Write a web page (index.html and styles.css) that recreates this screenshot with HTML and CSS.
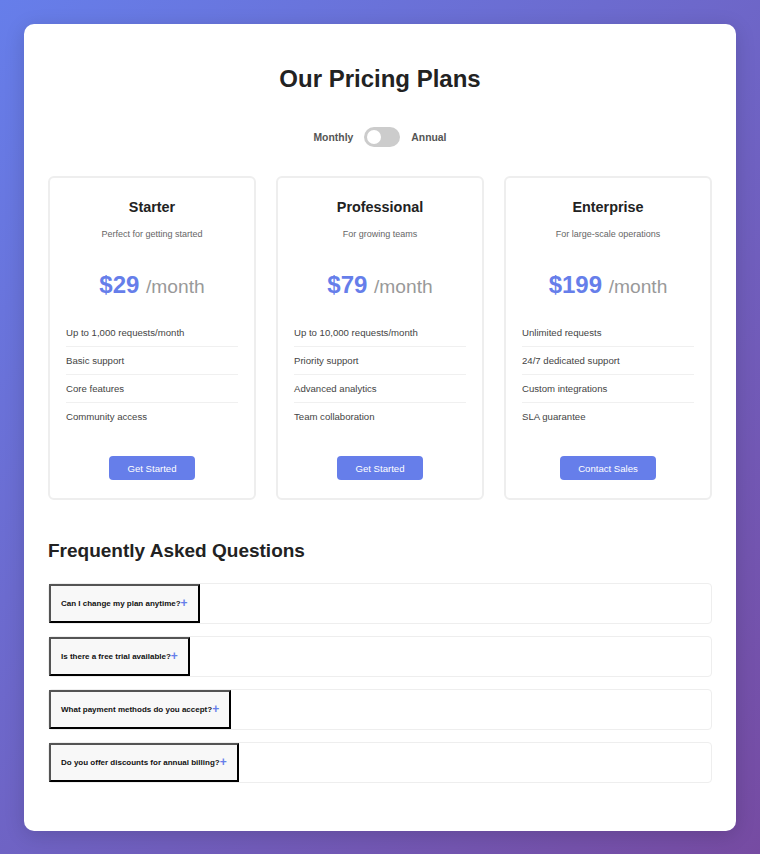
FILE: index.html
```html
<!DOCTYPE html>
<html lang="en">
<head>
    <meta charset="UTF-8">
    <meta name="viewport" content="width=device-width, initial-scale=1.0">
    <title>Pricing Plans</title>
    <link rel="stylesheet" href="styles.css">
</head>
<body>
    <div class="container">
        <h1>Our Pricing Plans</h1>

        <div class="billing-toggle">
            <span>Monthly</span>
            <div class="switch" onclick="toggleBilling()"><div class="knob"></div></div>
            <span>Annual</span>
        </div>

        <div class="plans">
            <div class="plan">
                <h3>Starter</h3>
                <p class="plan-desc">Perfect for getting started</p>
                <div class="price">$29 <span>/month</span></div>
                <ul class="features">
                    <li>Up to 1,000 requests/month</li>
                    <li>Basic support</li>
                    <li>Core features</li>
                    <li>Community access</li>
                </ul>
                <button class="plan-btn">Get Started</button>
            </div>
            <div class="plan">
                <h3>Professional</h3>
                <p class="plan-desc">For growing teams</p>
                <div class="price">$79 <span>/month</span></div>
                <ul class="features">
                    <li>Up to 10,000 requests/month</li>
                    <li>Priority support</li>
                    <li>Advanced analytics</li>
                    <li>Team collaboration</li>
                </ul>
                <button class="plan-btn">Get Started</button>
            </div>
            <div class="plan">
                <h3>Enterprise</h3>
                <p class="plan-desc">For large-scale operations</p>
                <div class="price">$199 <span>/month</span></div>
                <ul class="features">
                    <li>Unlimited requests</li>
                    <li>24/7 dedicated support</li>
                    <li>Custom integrations</li>
                    <li>SLA guarantee</li>
                </ul>
                <button class="plan-btn">Contact Sales</button>
            </div>
        </div>

        <div class="faq">
            <h2>Frequently Asked Questions</h2>
            <div class="faq-item"><button class="faq-question">Can I change my plan anytime?<span>+</span></button></div>
            <div class="faq-item"><button class="faq-question">Is there a free trial available?<span>+</span></button></div>
            <div class="faq-item"><button class="faq-question">What payment methods do you accept?<span>+</span></button></div>
            <div class="faq-item"><button class="faq-question">Do you offer discounts for annual billing?<span>+</span></button></div>
        </div>
    </div>

    <script>
        function toggleBilling() {
            document.querySelector('.switch').classList.toggle('on');
        }
    </script>
</body>
</html>
```

FILE: styles.css
```css
body {
    font-family: "Liberation Sans", Arial, sans-serif;
    background: linear-gradient(135deg, #667eea 0%, #764ba2 100%);
    margin: 0;
    padding: 24px;
    min-height: 100vh;
    box-sizing: border-box;
}
.container {
    background: white;
    border-radius: 10px;
    padding: 24px;
    box-shadow: 0 4px 20px rgba(0, 0, 0, 0.15);
}
h1 {
    text-align: center;
    font-size: 24px;
    color: #222;
    margin: 17px 0 34px;
}
.billing-toggle {
    display: flex;
    align-items: center;
    justify-content: center;
    gap: 11px;
    font-size: 10.4px;
    font-weight: bold;
    color: #555;
    margin-bottom: 29px;
}
.switch {
    width: 36px;
    height: 20px;
    background-color: #ccc;
    border-radius: 10px;
    position: relative;
    cursor: pointer;
}
.knob {
    width: 14px;
    height: 14px;
    background: white;
    border-radius: 50%;
    position: absolute;
    top: 3px;
    left: 3px;
    transition: left 0.2s;
}
.switch.on .knob {
    left: 19px;
}
.plans {
    display: grid;
    grid-template-columns: repeat(3, 1fr);
    gap: 20px;
}
.plan {
    border: 2px solid #eee;
    border-radius: 6px;
    padding: 21px 16px 18px;
    text-align: center;
}
.plan h3 {
    font-size: 14.4px;
    color: #222;
    margin: 0 0 14px;
}
.plan-desc {
    font-size: 9px;
    color: #666;
    margin: 0 0 32px;
}
.price {
    font-size: 24px;
    font-weight: bold;
    color: #667eea;
    margin-bottom: 20px;
}
.price span {
    font-size: 19.2px;
    font-weight: normal;
    color: #999;
}
.features {
    list-style: none;
    padding: 0;
    margin: 0 0 26px;
    text-align: left;
}
.features li {
    font-size: 9.6px;
    color: #444;
    padding: 8px 0;
    border-bottom: 1px solid #f0f0f0;
}
.features li:last-child {
    border-bottom: none;
}
.plan-btn {
    font-family: inherit;
    font-size: 9.6px;
    background-color: #667eea;
    color: white;
    border: none;
    border-radius: 4px;
    height: 24px;
    padding: 0 18px;
    cursor: pointer;
}
.plan-btn:hover {
    background-color: #5a6fd6;
}
.faq {
    margin-top: 40px;
    padding-bottom: 12px;
}
.faq h2 {
    font-size: 19px;
    color: #222;
    margin: 0 0 21px;
}
.faq-item {
    border: 1px solid #eee;
    border-radius: 4px;
    margin-bottom: 12px;
}
.faq-question {
    font-family: inherit;
    font-size: 8px;
    font-weight: bold;
    color: #111;
    background-color: #f8f8f8;
    padding: 13px 10px;
    cursor: pointer;
}
.faq-question span {
    font-size: 12px;
    line-height: 0;
    color: #667eea;
    vertical-align: -1px;
}
```
